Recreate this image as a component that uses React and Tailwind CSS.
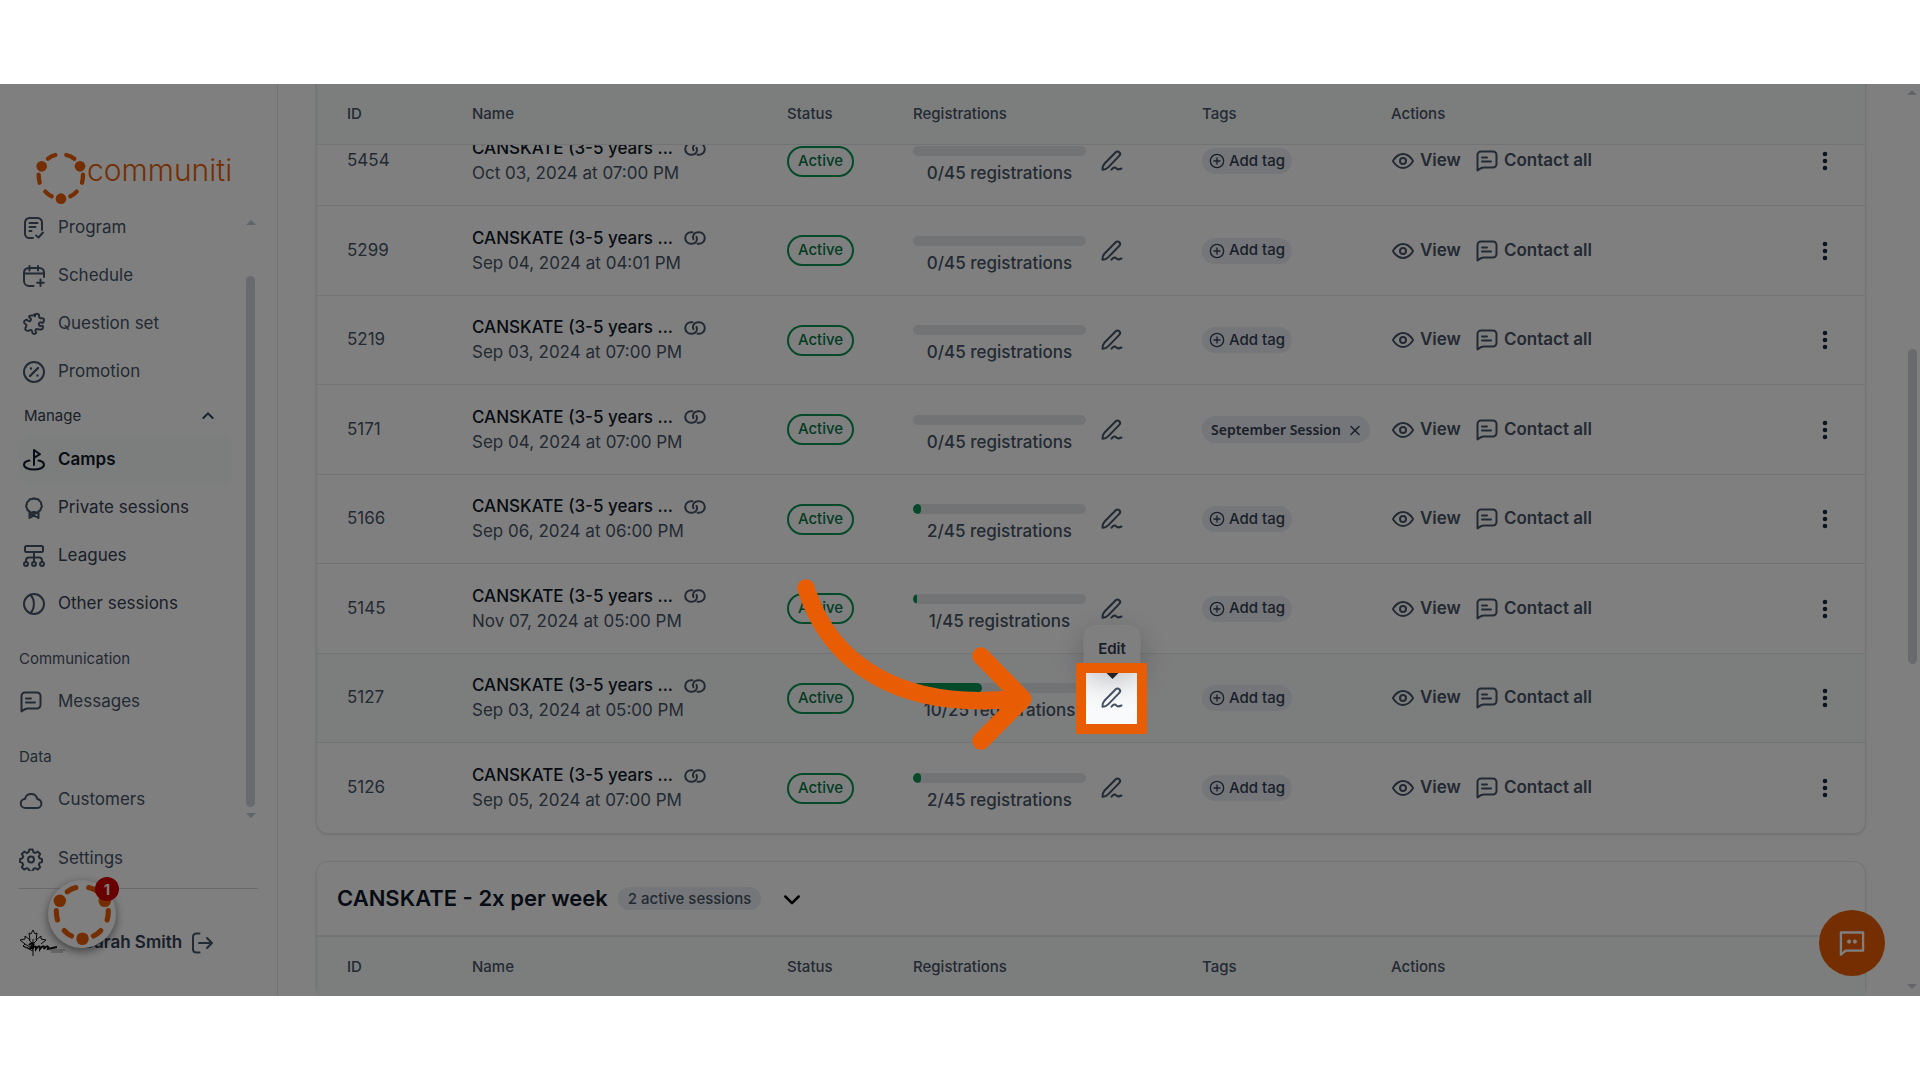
import React, { useLayoutEffect, useRef } from 'react';

const sessions = [
  { id: 5454, date: 'Oct 03, 2024 at 07:00 PM', count: 0, max: 45 },
  { id: 5299, date: 'Sep 04, 2024 at 04:01 PM', count: 0, max: 45 },
  { id: 5219, date: 'Sep 03, 2024 at 07:00 PM', count: 0, max: 45 },
  { id: 5171, date: 'Sep 04, 2024 at 07:00 PM', count: 0, max: 45, tag: 'September Session' },
  { id: 5166, date: 'Sep 06, 2024 at 06:00 PM', count: 2, max: 45 },
  { id: 5145, date: 'Nov 07, 2024 at 05:00 PM', count: 1, max: 45 },
  { id: 5127, date: 'Sep 03, 2024 at 05:00 PM', count: 10, max: 25, editing: true },
  { id: 5126, date: 'Sep 05, 2024 at 07:00 PM', count: 2, max: 45 },
];

const Icon = ({ children, className = 'size-6' }) => (
  <svg
    viewBox="0 0 24 24"
    fill="none"
    stroke="currentColor"
    strokeWidth="2"
    strokeLinecap="round"
    strokeLinejoin="round"
    className={`shrink-0 ${className}`}
    aria-hidden="true"
  >
    {children}
  </svg>
);

const ProgramIcon = () => (
  <Icon>
    <path d="M11 22H7.5A4.5 4.5 0 0 1 3 17.5v-11A4.500 4.500 0 0 1 7.500 2h8A4.500 4.500 0 0 1 20 6.500V14" />
    <path d="M7.500 7h8M7.500 11h6M7.500 15h2M14 19.500l2.500 2 4.500-5" />
  </Icon>
);

const ScheduleIcon = () => (
  <Icon>
    <path d="M11.500 22H7a5 5 0 0 1-5-5V8.500A4.500 4.500 0 0 1 6.500 4h11A4.500 4.500 0 0 1 22 8.500V13M2 9.500h20M7.500 2v4.500M16 2v4.500M18.500 15.500v6.500M15.200 18.700h6.600" />
  </Icon>
);

const PuzzleIcon = () => (
  <Icon>
    <path d="M12.800 4.200c.6-.6.200-1.400 1.100-2 1.600-1 3.500.3 3.300 2.100-.1 1 .3 1.900 1.100 1.900h1.900c1.300 0 2 1.100 1.700 2.200l-.3 1.600c-.3 1-1.400.9-2.200.5-1.200-.6-2.500.2-2.600 1.500-.1 1.500 1.300 2.500 2.600 1.900.9-.4 1.700 0 1.600 1l-.2 1.200c-.2 1.200-1.300 1.600-2.300 1.500h-1.200c-1 0-1.700-.8-2.700-.6-1.200.3-1.600 1.700-.8 2.700.6.700.4 1.600-.4 1.900-.8.400-1.900.5-2.600-.2-1-1-.2-2.300-1.300-3.200-1.100-.8-2.100.5-3.500.6-1.500.1-3-.8-2.800-2.400.1-1.200 1.400-1.600 1.300-2.900-.1-1.200-1.500-1.500-2.200-2.500-.7-1.200.2-2.300 1.400-3 .9-.5 1.600-.1 2.200.6.9 1 2.300.8 2.900-.4.400-1-.1-2-1-2.400-1-.500-.9-1.500-.1-2 1.200-.8 2.400-.2 3.200-.4.700-.2 1.300-.6 1.900-1.200Z" />
  </Icon>
);

const PromotionIcon = () => (
  <Icon>
    <circle cx="12" cy="12" r="10" />
    <path d="m8 16 8-8M9 8.500v.01M15.500 15.500v.01" strokeWidth="2.400" />
  </Icon>
);

const CampsIcon = () => (
  <Icon>
    <path d="M7.500 12.600C4.200 13.200 2 14.700 2 16.800 2 19.700 6.500 21.500 12 21.500s10-1.800 10-4.700c0-2.100-2.200-3.600-5.500-4.200" />
    <path d="M12 17V2l6 4.200-6 3.600" />
  </Icon>
);

const PrivateIcon = () => (
  <Icon>
    <path d="M10 3.200c1.200-1 2.800-1 4 0 1.500-.3 2.800.3 3.300 1.700 1.400.7 2.200 1.900 1.900 3.500.9 1.300.8 2.700-.3 3.800 0 1.600-.9 2.700-2.400 3-.9 1.300-2.300 1.700-3.500.9h-2c-1.300.8-2.700.4-3.500-.9-1.500-.3-2.400-1.400-2.400-3-1.100-1.100-1.200-2.500-.3-3.800-.3-1.600.5-2.800 1.900-3.500.5-1.400 1.800-2 3.300-1.700Z" />
    <path d="M7.500 16v6l4.500-2.500 4.500 2.500v-6M8 19l7-2" />
  </Icon>
);

const LeaguesIcon = () => (
  <Icon>
    <rect x="3" y="2" width="18" height="6" rx="1.500" />
    <path d="M12 8v9M4 18v-1.500C4 14.500 5 13.500 7 13.500h10c2 0 3 1 3 3V18" />
    <circle cx="4" cy="20" r="2" />
    <circle cx="12" cy="20" r="2" />
    <circle cx="20" cy="20" r="2" />
  </Icon>
);

const OtherIcon = () => (
  <Icon>
    <circle cx="12" cy="12" r="10" />
    <path d="M8.500 3c4.500 4.500 4.500 13.500 0 18" />
  </Icon>
);

const MessageIcon = () => (
  <Icon>
    <path d="M2.500 21.500V6A3.500 3.500 0 0 1 6 2.500h12A3.500 3.500 0 0 1 21.500 6v9a3.500 3.500 0 0 1-3.500 3.500H8.500c-2 0-3.500 1-6 3Z" />
    <path d="M7 8.500h5M7 12.500h9" />
  </Icon>
);

const CloudIcon = () => (
  <Icon>
    <path d="M6.500 20A4.500 4.500 0 0 1 6 11a6.300 6.300 0 0 1 12.300 0A4.500 4.500 0 0 1 17.500 20Z" />
  </Icon>
);

const SettingsIcon = () => (
  <Icon>
    <path d="M10.300 2.500h3.400l.7 2.700 1.900.8 2.500-1.400 2.400 2.400-1.400 2.500.8 1.800 2.400.8v3l-2.400.8-.8 1.900 1.400 2.400-2.400 2.400-2.500-1.400-1.900.8-.7 2.300h-3.400l-.7-2.300-1.900-.8-2.500 1.400-2.400-2.400 1.400-2.400-.8-1.900-2.400-.8v-3l2.400-.8.8-1.800-1.400-2.500 2.400-2.400 2.500 1.400 1.900-.8Z" />
    <circle cx="12" cy="12.500" r="3" />
  </Icon>
);

const LogoutIcon = () => (
  <Icon>
    <path d="M9.500 2.500H6.500C4 2.500 3 3.500 3 6v12c0 2.500 1 3.500 3.500 3.500h3M9 12h13M17 7l5 5-5 5" />
  </Icon>
);

const LinkIcon = () => (
  <Icon>
    <path d="M9.500 6.200H8a5.800 5.800 0 0 0 0 11.600h1.200a4.800 4.800 0 0 0 4.300-7" />
    <path d="M14.500 17.800H16a5.800 5.800 0 0 0 0-11.600h-1.200a4.800 4.800 0 0 0-4.300 7" />
  </Icon>
);

const EditIcon = () => (
  <Icon>
    <path d="M4.600 14.500 15.700 3.300a2.500 2.500 0 0 1 3.600 3.600L8.400 18.100c-1.700 1.800-3.400 2.800-5.900 2.700-.1-2.500.5-4.600 2.100-6.300Z" />
    <path d="M11.500 20.700c2.200-2.700 3.700-2.800 4.700-1.400 1 1.500 2.500 1.500 5.300.2" />
  </Icon>
);

const EyeIcon = () => (
  <Icon>
    <path d="M21.500 11c.3.400.5.700.5 1s-.2.600-.5 1C20.200 14.900 16.700 19 12 19s-8.200-4.100-9.500-6c-.3-.4-.5-.7-.5-1s.2-.6.500-1C3.800 9.100 7.300 5 12 5s8.200 4.100 9.500 6Z" />
    <circle cx="12" cy="12" r="3" />
  </Icon>
);

const PlusIcon = () => (
  <Icon className="size-4">
    <circle cx="12" cy="12" r="10" />
    <path d="M12 7.500v9M7.500 12h9" />
  </Icon>
);

const Ring = ({ className }) => (
  <svg viewBox="0 0 150 156" className={className} aria-hidden="true">
    <g fill="#E85D04">
      <circle cx="17" cy="43" r="16" />
      <circle cx="132" cy="43" r="16" />
      <circle cx="75" cy="140" r="16" />
    </g>
    <g fill="none" stroke="#E85D04" strokeWidth="13" strokeLinecap="round">
      <path d="M36 20Q46 12 58 9M91 9Q104 12 115 20M8 68Q8 81 11 92M141 68Q141 81 138 92M28 119Q36 128 47 133M122 119Q114 128 103 133" />
    </g>
  </svg>
);

const MapleLogo = () => (
  <svg viewBox="0 0 48 28" className="h-7 w-12 shrink-0" fill="none" stroke="#111" aria-hidden="true">
    <path d="M14 27V10M14 22 4 17l2-2-5-4 5-1V7l5 4-1-7 2 1 2-4 2 4 2-1-1 7 5-4v3l5 1-5 4M14 15l-4-4M14 15l4-4M14 20l-8-5M4 17l7 3" />
    <path d="M11 20c3-6 4-4 2 0 4-4 4-3 4 0 3-4 4-3 4 0 3-4 5-3 4 0 3-4 5-3 4 0l9-2M10 16c3-3 6-2 4 1" strokeWidth="2" />
    <path d="M30 21h16M32 23h12" stroke="#999" />
  </svg>
);

const NavItem = ({ icon, label, active, indent, dark }) => (
  <a
    href="#"
    className={`flex h-12 items-center rounded-lg ${active ? 'bg-gray-50 font-semibold text-[#101828]' : dark ? 'text-[#344054]' : 'text-[#475467]'}`}
  >
    <span className={`w-[39px] shrink-0 ${indent ? 'pl-[3px]' : ''} ${active ? 'text-[#101828]' : 'text-[#475467]'}`}>{icon}</span>
    {label}
  </a>
);

const ArrowHead = ({ down }) => (
  <svg viewBox="0 0 10 5" className="h-[5px] w-[10px]" fill="#c3c8d0" aria-hidden="true">
    <path d={down ? 'M0 0h10L5 5Z' : 'M0 5h10L5 0Z'} />
  </svg>
);

const Sidebar = () => (
  <aside className="flex w-[278px] shrink-0 flex-col border-r border-gray-200 text-[17px]">
    <div className="flex h-[120px] shrink-0 items-start pt-[68px] pl-9">
      <Ring className="h-[52px] w-[50px]" />
      <span className="pl-[1px] text-[30px] leading-[36px] font-light text-[#E85D04]">communiti</span>
    </div>
    <div className="flex h-[620px] shrink-0 justify-between pr-[21px] pl-[19px]">
      <nav className="w-[213px]">
        <NavItem indent icon={<ProgramIcon />} label="Program" />
        <NavItem indent icon={<ScheduleIcon />} label="Schedule" />
        <NavItem indent icon={<PuzzleIcon />} label="Question set" />
        <NavItem indent icon={<PromotionIcon />} label="Promotion" />
        <button type="button" className="flex h-10 w-full items-center justify-between pr-4 pl-[5px] text-[15px] text-[#344054]">
          Manage
          <Icon className="size-4"><path d="m5 15 7-7 7 7" strokeWidth="3" /></Icon>
        </button>
        <NavItem indent active icon={<CampsIcon />} label="Camps" />
        <NavItem indent dark icon={<PrivateIcon />} label="Private sessions" />
        <NavItem indent dark icon={<LeaguesIcon />} label="Leagues" />
        <NavItem indent dark icon={<OtherIcon />} label="Other sessions" />
        <h2 className="flex h-[50px] items-center pt-3 text-[15px] text-[#475467]">Communication</h2>
        <NavItem icon={<MessageIcon />} label="Messages" />
        <h2 className="flex h-[50px] items-center pt-3 text-[15px] text-[#475467]">Data</h2>
        <NavItem icon={<CloudIcon />} label="Customers" />
      </nav>
      <div className="flex w-[11px] flex-col items-center pt-4 pb-[6px]">
        <ArrowHead />
        <div className="mt-[51px] mb-[6px] w-[9px] flex-1 rounded-full bg-[#d0d5dd]" />
        <ArrowHead down />
      </div>
    </div>
    <div className="px-[19px] pt-[11px]">
      <NavItem icon={<SettingsIcon />} label="Settings" />
      <div className="mt-[5px] flex items-center border-t border-gray-300 pt-[40px] font-semibold text-[#344054]">
        <MapleLogo />
        <span className="pl-[16px]">Sarah Smith</span>
        <button type="button" aria-label="Log out" className="ml-2 text-[#475467]"><LogoutIcon /></button>
      </div>
    </div>
  </aside>
);

const columns = ['ID', 'Name', 'Status', 'Registrations', 'Tags', 'Actions', ''];

const SessionTable = ({ rows }) => (
  <table className="w-full table-fixed border-separate border-spacing-0 text-left text-[17px] text-[#475467]">
    <colgroup>
      <col className="w-[125px]" />
      <col className="w-[315px]" />
      <col className="w-[126px]" />
      <col className="w-[289px]" />
      <col className="w-[189px]" />
      <col />
      <col className="w-[82px]" />
    </colgroup>
    <thead>
      <tr className="h-[61px]">
        {columns.map((name, i) => (
          <th key={i} className="sticky top-0 z-10 border-b border-gray-200 bg-gray-50 pl-[30px] text-[15px] font-medium">
            {name}
          </th>
        ))}
      </tr>
    </thead>
    <tbody>
      {rows.map((row) => (
        <tr
          key={row.id}
          className={`odd:h-[89px] even:h-[90px] *:border-b *:border-gray-200 *:pl-[30px] last:*:border-b-0 ${row.editing ? 'bg-gray-50' : ''}`}
        >
          <td>{row.id}</td>
          <td className="leading-[25px]">
            <div className="flex items-center gap-[10px] font-medium text-[#101828]">
              CANSKATE (3-5 years ...
              <a href="#" aria-label="Session link" className="text-[#475467]"><LinkIcon /></a>
            </div>
            {row.date}
          </td>
          <td>
            <span className="inline-flex h-[31px] w-[67px] items-center justify-center rounded-full border-2 border-[#079455] text-[15px] font-medium text-[#067647]">
              Active
            </span>
          </td>
          <td>
            <div className="flex items-center gap-[14px]">
              <div className="w-[173px] pt-[10px]">
                <div className="h-[10px] overflow-hidden rounded-full bg-gray-200">
                  <div className="h-full rounded-full bg-[#079455]" style={{ width: `${(row.count / row.max) * 100}%` }} />
                </div>
                <div className="mt-[5px] text-center leading-[25px] font-medium">
                  {row.count}/{row.max} registrations
                </div>
              </div>
              <div className="relative h-6">
                <button type="button" aria-label="Edit registrations"><EditIcon /></button>
                {row.editing && (
                  <div
                    role="tooltip"
                    className="absolute bottom-[37px] left-1/2 flex h-12 w-[57px] -translate-x-1/2 items-center justify-center rounded-xl bg-white text-[15px] font-semibold text-[#344054] shadow-[0_8px_28px_rgba(16,24,40,0.25)]"
                  >
                    Edit
                    <svg viewBox="0 0 14 7" className="absolute top-full h-[6px] w-[14px]" fill="#222" aria-hidden="true">
                      <path d="M0 0h14L7 7Z" />
                    </svg>
                  </div>
                )}
              </div>
            </div>
          </td>
          <td>
            {row.tag ? (
              <span className="inline-flex h-[27px] items-center gap-2 rounded-full bg-[#eaecf2] px-[9px] font-['Noto_Sans'] text-[14px] font-semibold whitespace-nowrap text-[#344054]">
                {row.tag}
                <button type="button" aria-label="Remove tag">
                  <Icon className="size-3"><path d="m4 5 16 16M20 5 4 21" strokeWidth="3" /></Icon>
                </button>
              </span>
            ) : (
              <button type="button" className="flex h-[26px] items-center gap-1 rounded-full bg-[#eaecf2] px-[7px] text-[15px] font-medium whitespace-nowrap text-[#344054]">
                <PlusIcon />
                Add tag
              </button>
            )}
          </td>
          <td>
            <div className="flex items-center gap-[14px] font-semibold">
              <button type="button" className="flex items-center gap-[5px]"><EyeIcon />View</button>
              <button type="button" className="flex items-center gap-[5px] whitespace-nowrap"><MessageIcon />Contact all</button>
            </div>
          </td>
          <td>
            <button type="button" aria-label="More actions" className="block text-[#1d2939]">
              <svg viewBox="0 0 24 24" className="size-6" fill="currentColor" aria-hidden="true">
                <circle cx="12" cy="5" r="2.300" />
                <circle cx="12" cy="12" r="2.300" />
                <circle cx="12" cy="19" r="2.300" />
              </svg>
            </button>
          </td>
        </tr>
      ))}
    </tbody>
  </table>
);

const App = () => {
  const mainRef = useRef(null);

  // Start with the first row partly under the sticky header
  useLayoutEffect(() => {
    mainRef.current.scrollTop = 28;
  }, []);

  return (
    <div className="min-h-screen bg-white py-[84px] font-['Inter',sans-serif]">
      <div className="relative flex h-[calc(100vh-168px)] overflow-hidden bg-white">
        <Sidebar />

        <main ref={mainRef} className="min-w-0 flex-1 overflow-hidden pr-[38px] pb-16 pl-[38px]">
          <section className="rounded-xl border-x border-b border-gray-200 shadow-sm">
            <SessionTable rows={sessions} />
          </section>
          <section className="mt-[27px] rounded-xl border border-gray-200 shadow-sm">
            <div className="flex h-[75px] items-center border-b-2 border-gray-200 pl-5">
              <h2 className="text-[22px] font-semibold text-[#101828]">CANSKATE - 2x per week</h2>
              <span className="ml-[10px] rounded-full bg-[#eaecf2] px-[10px] text-[15px] leading-[23px] font-medium text-[#475467]">
                2 active sessions
              </span>
              <button type="button" aria-label="Expand" className="ml-[21px] text-black">
                <Icon className="size-5"><path d="m4 9 8 8 8-8" strokeWidth="3" /></Icon>
              </button>
            </div>
            <SessionTable rows={[]} />
          </section>
        </main>

        {/* Scroll bar */}
        <div className="flex w-4 shrink-0 flex-col items-center pt-[6px] pb-[7px]">
          <ArrowHead />
          <div className="mt-[254px] h-[315px] w-[9px] rounded-full bg-[#d0d5dd]" />
          <div className="mt-auto"><ArrowHead down /></div>
        </div>

        {/* Floating buttons */}
        <button
          type="button"
          aria-label="Help"
          className="absolute bottom-12 left-12 z-20 flex size-[68px] items-center justify-center rounded-full bg-white shadow-[0_3px_10px_rgba(0,0,0,0.5)]"
        >
          <Ring className="h-[61px] w-[59px]" />
          <span className="absolute -top-[3px] -right-[3px] flex size-6 items-center justify-center rounded-full bg-[#d00000] text-[14px] font-bold text-white">
            1
          </span>
        </button>
        <button
          type="button"
          aria-label="Chat"
          className="absolute right-[35px] bottom-5 z-20 flex size-[66px] items-center justify-center rounded-full bg-[#E85D04] text-white"
        >
          <svg viewBox="0 0 24 24" className="size-7" fill="none" stroke="currentColor" strokeWidth="2" strokeLinejoin="round" aria-hidden="true">
            <path d="M2.500 22V3h19v15.500H6.500Z" />
            <path d="M9.500 10.800v.01M14.500 10.800v.01" strokeWidth="3.500" strokeLinecap="round" />
          </svg>
        </button>

        {/* Spotlight: its shadow dims all the rest */}
        <div className="pointer-events-none absolute top-[579px] left-[1076px] z-30 size-[71px] border-[10px] border-[#E85D04] shadow-[0_0_0_3000px_rgba(0,0,0,0.5)]" />
        <svg
          viewBox="0 0 240 180"
          className="pointer-events-none absolute top-[486px] left-[795px] z-30 h-[180px] w-[240px]"
          fill="none"
          stroke="#E85D04"
          strokeWidth="17.500"
          strokeLinecap="round"
          strokeLinejoin="round"
          aria-hidden="true"
        >
          <path d="M11 18C34 92 104 143 226 128M186 86l42 43-42 42" />
        </svg>
      </div>
    </div>
  );
};

export default App;
